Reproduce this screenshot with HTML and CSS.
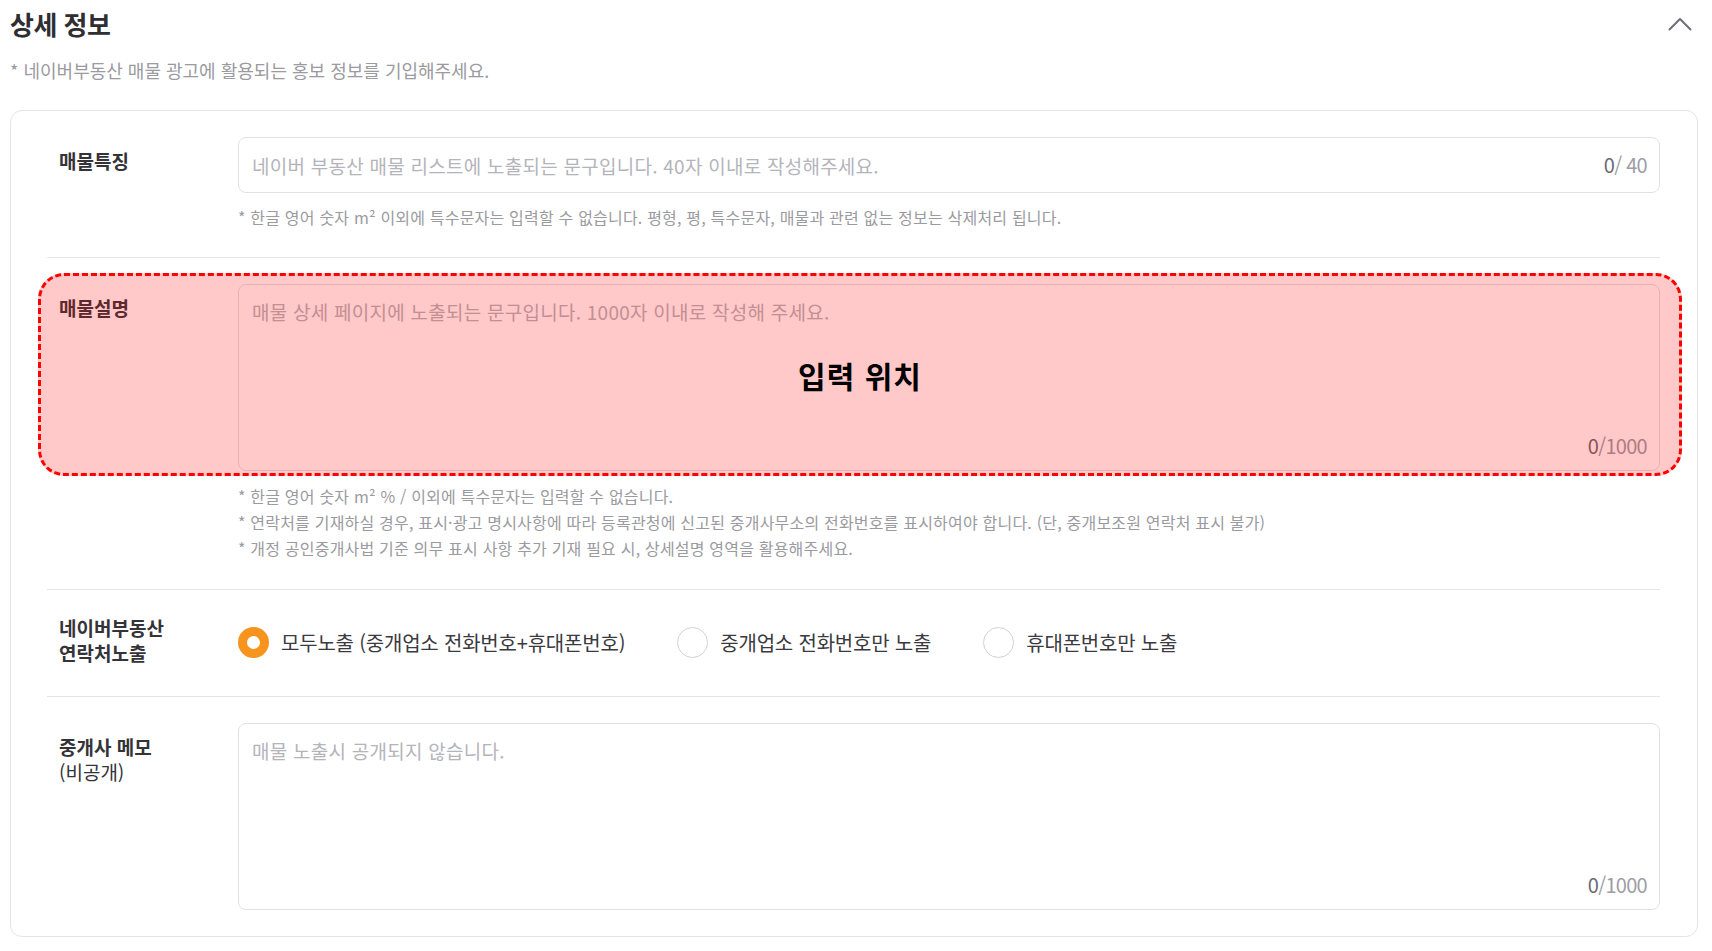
FILE: index.html
```html
<!DOCTYPE html>
<html lang="ko">
<head>
  <meta charset="UTF-8" />
  <meta name="viewport" content="width=device-width, initial-scale=1.0"/>
  <title>상세 정보</title>
  <link rel="stylesheet" href="styles.css">
</head>
<body>

  <div class="page">
    <div class="section-head">
      <h2>상세 정보</h2>
      <button class="fold" type="button" aria-label="접기">
        <svg width="24" height="14" viewBox="0 0 24 14"><path d="M1.5 12.5 L12 2 L22.5 12.5" fill="none" stroke="#6e6e78" stroke-width="2" stroke-linecap="round" stroke-linejoin="round"/></svg>
      </button>
    </div>
    <p class="section-desc">* 네이버부동산 매물 광고에 활용되는 홍보 정보를 기입해주세요.</p>

    <div class="card">
      <!-- 매물특징 -->
      <div class="row">
        <div class="field">
          <div class="label">매물특징</div>
          <div class="control">
            <input type="text" class="text-input" placeholder="네이버 부동산 매물 리스트에 노출되는 문구입니다. 40자 이내로 작성해주세요.">
            <span class="count count-mid"><b>0</b>/ 40</span>
          </div>
        </div>
        <ul class="hints">
          <li>* 한글 영어 숫자 m² 이외에 특수문자는 입력할 수 없습니다. 평형, 평, 특수문자, 매물과 관련 없는 정보는 삭제처리 됩니다.</li>
        </ul>
      </div>

      <!-- 매물설명 -->
      <div class="row">
        <div class="field highlight">
          <div class="label">매물설명</div>
          <div class="control">
            <textarea class="text-area" placeholder="매물 상세 페이지에 노출되는 문구입니다. 1000자 이내로 작성해 주세요."></textarea>
            <span class="count count-bottom"><b>0</b>/1000</span>
          </div>
          <div class="mark"><span>입력 위치</span></div>
        </div>
        <ul class="hints">
          <li>* 한글 영어 숫자 m² % / 이외에 특수문자는 입력할 수 없습니다.</li>
          <li>* 연락처를 기재하실 경우, 표시·광고 명시사항에 따라 등록관청에 신고된 중개사무소의 전화번호를 표시하여야 합니다. (단, 중개보조원 연락처 표시 불가)</li>
          <li>* 개정 공인중개사법 기준 의무 표시 사항 추가 기재 필요 시, 상세설명 영역을 활용해주세요.</li>
        </ul>
      </div>

      <!-- 연락처노출 -->
      <div class="row row-radio">
        <div class="field">
          <div class="label">네이버부동산<br>연락처노출</div>
          <div class="options">
            <label class="option"><input type="radio" name="contact" checked>모두노출 (중개업소 전화번호+휴대폰번호)</label>
            <label class="option"><input type="radio" name="contact">중개업소 전화번호만 노출</label>
            <label class="option"><input type="radio" name="contact">휴대폰번호만 노출</label>
          </div>
        </div>
      </div>

      <!-- 중개사 메모 -->
      <div class="row row-last">
        <div class="field">
          <div class="label">중개사 메모<br><span class="sub">(비공개)</span></div>
          <div class="control">
            <textarea class="text-area" placeholder="매물 노출시 공개되지 않습니다."></textarea>
            <span class="count count-bottom"><b>0</b>/1000</span>
          </div>
        </div>
      </div>
    </div>
  </div>

</body>
</html>
```

FILE: styles.css
```css
:root {
  --text-dark: #333338;
  --text-gray: #9a9aa0;
  --placeholder: #b4b4bb;
  --line: #e4e4ea;
  --orange: #f7941d;
}

* {
  margin: 0;
  padding: 0;
  box-sizing: border-box;
}

body {
  font-family: "Noto Sans CJK KR", "Noto Sans", sans-serif;
  background-color: #ffffff;
  color: var(--text-dark);
}

.page {
  padding: 8px 14px 0 10px;
}

.section-head {
  display: flex;
  justify-content: space-between;
  align-items: center;
}

.section-head h2 {
  font-size: 26px;
  line-height: 32px;
  font-weight: 600;
  letter-spacing: -0.5px;
  color: #2e2e33;
}

.fold {
  border: none;
  background: none;
  margin-right: 6px;
  display: flex;
  cursor: pointer;
}

.section-desc {
  margin-top: 18px;
  font-size: 18px;
  line-height: 24px;
  color: var(--text-gray);
}

.card {
  margin-top: 28px;
  border: 1px solid var(--line);
  border-radius: 12px;
  padding: 0 37px 0 36px;
}

.row {
  padding: 26px 0 28px;
  border-bottom: 1px solid var(--line);
}

.row-last {
  border-bottom: none;
  padding-bottom: 26px;
}

.row-radio {
  padding: 25px 0 31px;
}

.field {
  display: flex;
  align-items: flex-start;
  position: relative;
}

.label {
  width: 191px;
  flex-shrink: 0;
  padding: 11px 0 0 12px;
  font-size: 19px;
  line-height: 25px;
  font-weight: 600;
  color: var(--text-dark);
}

.label .sub {
  font-weight: 400;
}

.row-radio .label {
  padding-top: 0;
}

.control {
  flex: 1;
  position: relative;
}

.text-input,
.text-area {
  width: 100%;
  display: block;
  border: 1px solid #e1e1e7;
  border-radius: 8px;
  background: #ffffff;
  font-family: inherit;
  font-size: 19px;
  letter-spacing: 0.25px;
  color: var(--text-dark);
  outline: none;
}

.text-input {
  height: 56px;
  padding: 0 80px 0 13px;
}

.text-area {
  height: 187px;
  padding: 14px 13px;
  line-height: 26px;
  resize: none;
}

.text-input::placeholder,
.text-area::placeholder {
  color: var(--placeholder);
}

.count {
  position: absolute;
  right: 13px;
  font-size: 20px;
  line-height: 24px;
  letter-spacing: -0.7px;
  color: #9d9da5;
}

.count b {
  font-weight: 400;
  color: #6a6a74;
}

.count-mid {
  top: 16px;
}

.count-bottom {
  bottom: 13px;
}

.hints {
  list-style: none;
  margin: 12px 0 0 191px;
}

.hints li {
  font-size: 16px;
  line-height: 26px;
  letter-spacing: 0.2px;
  color: var(--text-gray);
}

.row:first-child .hints li {
  line-height: 24px;
}

/* 입력 위치 표시 */
.mark {
  position: absolute;
  top: -11px;
  bottom: -5px;
  left: -9px;
  right: -22px;
  border: 3px dashed #ff0000;
  border-radius: 26px;
  background-color: rgba(255, 0, 0, 0.21);
  display: flex;
  justify-content: center;
  align-items: center;
  pointer-events: none;
}

.mark span {
  font-size: 30px;
  font-weight: 700;
  letter-spacing: 1px;
  color: #000000;
}

.options {
  display: flex;
  align-items: center;
  gap: 52px;
  margin-top: 12px;
}

.option {
  display: flex;
  align-items: center;
  gap: 12px;
  font-size: 20px;
  line-height: 26px;
  letter-spacing: -0.2px;
  color: #3a3a40;
  cursor: pointer;
}

.option input {
  appearance: none;
  -webkit-appearance: none;
  width: 31px;
  height: 31px;
  border-radius: 50%;
  border: 1.5px solid #d2d2d8;
  background: #ffffff;
  margin: 0;
  flex-shrink: 0;
  cursor: pointer;
}

.option input:checked {
  border: 9px solid var(--orange);
}
```
